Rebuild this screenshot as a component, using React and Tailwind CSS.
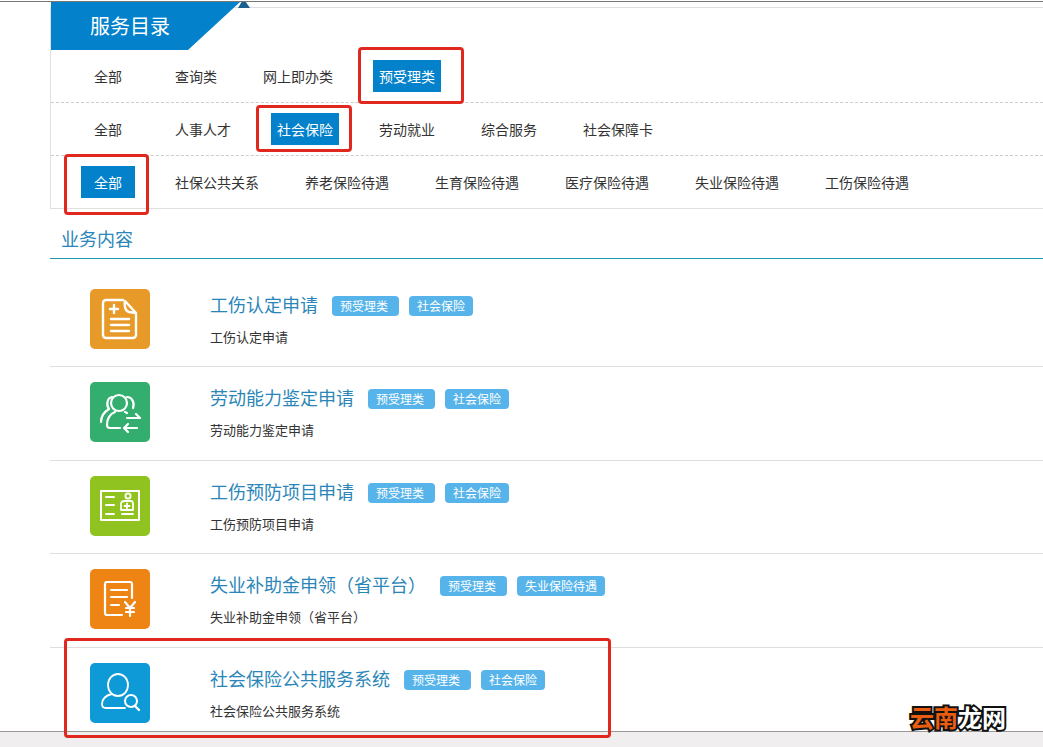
import React from 'react';

const IconDoc = () => (
  <svg viewBox="0 0 60 60" className="w-[60px] h-[60px]" fill="none" stroke="#fff" strokeWidth="2.4" strokeLinecap="round" strokeLinejoin="round">
    <path d="M33 11H16a3 3 0 0 0-3 3v32a3 3 0 0 0 3 3h27a3 3 0 0 0 3-3V24L35 12c-1 4 0 10 4 11l7 1" />
    <path d="M24 16v8M20 20h8M21 30h18M21 36h18M21 42h18" />
  </svg>
);

const IconPeople = () => (
  <svg viewBox="0 0 60 60" className="w-[60px] h-[60px]" fill="none" stroke="#fff" strokeWidth="2.2" strokeLinecap="round" strokeLinejoin="round">
    <circle cx="29" cy="21" r="8" />
    <path d="M30 46H20c-2 0-3-1-3-3 0-6 3-11 8-13M35 30l2 1" />
    <path d="M22 15c-5 1-6 8-3 12-5 3-8 8-8 13" />
    <path d="M37 15c5 0 8 6 6 11" />
    <path d="M37 36h13l-4-4M47 46H34l4-4M34 46l4 4" />
  </svg>
);

const IconCard = () => (
  <svg viewBox="0 0 60 60" className="w-[60px] h-[60px]" fill="none" stroke="#fff" strokeWidth="1.8" strokeLinecap="round" strokeLinejoin="round">
    <rect x="11" y="15" width="38" height="29" strokeWidth="2" />
    <path d="M16 21h8M16 29h8M16 38h8M32 38h11" strokeWidth="2" />
    <circle cx="38" cy="20" r="2.600" />
    <path d="M31 34v-6c0-2 2-3 4-3h6c1 0 2 1 2 3v6zM37 27.500v5M34.500 30h5" />
  </svg>
);

const IconBill = () => (
  <svg viewBox="0 0 60 60" className="w-[60px] h-[60px]" fill="none" stroke="#fff" strokeWidth="2.2" strokeLinecap="round" strokeLinejoin="round">
    <path d="M42 29V15a2 2 0 0 0-2-2H17a2 2 0 0 0-2 2v29a2 2 0 0 0 2 2h15" />
    <path d="M21 21h16M21 28h16M21 36h8" />
    <path d="M35 33l5 6 5-6M36 39h8M36 43h8M40 39v8" />
  </svg>
);

const IconSearchUser = () => (
  <svg viewBox="0 0 60 60" className="w-[60px] h-[60px]" fill="none" stroke="#fff" strokeWidth="1.8" strokeLinecap="round" strokeLinejoin="round">
    <ellipse cx="28" cy="22" rx="10" ry="11" />
    <path d="M35 45H16c-3 0-4-2-4-4 0-5 4-9 10-10" />
    <circle cx="41" cy="38" r="6" strokeWidth="2" />
    <path d="M45 43l4 4" strokeWidth="2.400" />
  </svg>
);

const navRows = [
  { items: ['全部', '查询类', '网上即办类', '预受理类'], active: '预受理类' },
  { items: ['全部', '人事人才', '社会保险', '劳动就业', '综合服务', '社会保障卡'], active: '社会保险' },
  { items: ['全部', '社保公共关系', '养老保险待遇', '生育保险待遇', '医疗保险待遇', '失业保险待遇', '工伤保险待遇'], active: '全部' },
];

const services = [
  { title: '工伤认定申请', tag: '社会保险', icon: IconDoc, color: 'bg-[#e89a28]', height: 'h-[108px] pt-[30px]' },
  { title: '劳动能力鉴定申请', tag: '社会保险', icon: IconPeople, color: 'bg-[#33ae6f]', height: 'h-[94px] pt-[15px]' },
  { title: '工伤预防项目申请', tag: '社会保险', icon: IconCard, color: 'bg-[#90c320]', height: 'h-[93px] pt-[15px]' },
  { title: '失业补助金申领（省平台）', tag: '失业保险待遇', icon: IconBill, color: 'bg-[#ee8413]', height: 'h-[94px] pt-[15px]' },
  { title: '社会保险公共服务系统', tag: '社会保险', icon: IconSearchUser, color: 'bg-[#0e9ad6]', height: 'h-[84px] pt-[15px]' },
];

const Tag = ({ children, wide }) => (
  <span className={`h-5 flex items-center rounded bg-[#56b4ea] text-white text-xs pl-2 ${wide ? 'pr-[11px]' : 'pr-2'}`}>
    {children}
  </span>
);

const ServiceRow = ({ title, tag, icon: Icon, color, height, last }) => (
  <div className={`flex pl-10 ${height} ${last ? '' : 'border-b border-[#dedede]'}`}>
    <div className={`w-[60px] h-[60px] rounded-[5px] shrink-0 ${color}`}>
      <Icon />
    </div>
    <div className="ml-[60px]">
      <div className="flex items-center gap-[14px] h-8 -mt-px">
        <h3 className="text-lg font-normal text-[#2a86b8]">{title}</h3>
        <div className="flex gap-2.5 mt-1">
          <Tag wide>预受理类</Tag>
          <Tag>{tag}</Tag>
        </div>
      </div>
      <p className="mt-[9px] text-[13px] leading-4 text-[#333]">{title}</p>
    </div>
  </div>
);

const Mark = ({ className }) => (
  <div className={`absolute border-[3px] border-[#e0281f] rounded ${className}`} />
);

export default function App() {
  return (
    <div className="relative w-[1043px] h-[747px] overflow-hidden bg-white font-['Noto_Sans_CJK_SC',sans-serif] text-[#333]">
      <div className="mt-px h-px bg-[#777]" />

      {/* catalogue panel */}
      <div className="relative ml-[50px] mt-[5px] border-t border-l border-b border-[#dfdfdf]">
        <div className="-mt-[6px] w-[189px] h-[48px] flex items-center pl-[39px] bg-[#0481cb] text-white text-xl [clip-path:polygon(0_0,100%_0,137px_100%,0_100%)]">
          服务目录
        </div>
        <div className="absolute left-[187px] -top-[6px] w-3 h-[6px] bg-[#1a5f8f] [clip-path:polygon(30%_0,65%_0,100%_100%,0_100%)]" />
        {navRows.map((row, i) => (
          <div
            key={i}
            className={`flex gap-[34px] pl-[30px] py-2.5 ${i < 2 ? 'border-b border-dashed border-[#ccc]' : ''}`}
          >
            {row.items.map((item) => (
              <span
                key={item}
                className={`h-8 min-w-[54px] px-1.5 flex items-center justify-center text-sm ${
                  item === row.active ? 'bg-[#0481cb] text-white' : ''
                }`}
              >
                {item}
              </span>
            ))}
          </div>
        ))}
      </div>

      {/* service list */}
      <div className="ml-[50px]">
        <h2 className="h-[50px] pl-[11px] pt-4 text-lg leading-[26px] font-normal text-[#2a86b8] border-b border-[#1f9aa8]">
          业务内容
        </h2>
        {services.map((s, i) => (
          <ServiceRow key={s.title} {...s} last={i === services.length - 1} />
        ))}
      </div>
      <div className="absolute left-0 right-0 bottom-0 h-[16px] bg-[#f0eeee] border-t border-[#999]" />

      {/* red annotations */}
      <Mark className="left-[358px] top-[47px] w-[106px] h-[57px]" />
      <Mark className="left-[256px] top-[105px] w-[96px] h-[47px]" />
      <Mark className="left-[64px] top-[154px] w-[85px] h-[61px]" />
      <Mark className="left-[64px] top-[638px] w-[547px] h-[100px]" />

      {/* watermark */}
      <div className="absolute left-[910px] top-[702px] text-2xl leading-[30px] font-bold [-webkit-text-stroke:4px_#111] [paint-order:stroke_fill]">
        <span className="text-[#e85d10]">云南</span>
        <span className="text-white">龙网</span>
      </div>
    </div>
  );
}
